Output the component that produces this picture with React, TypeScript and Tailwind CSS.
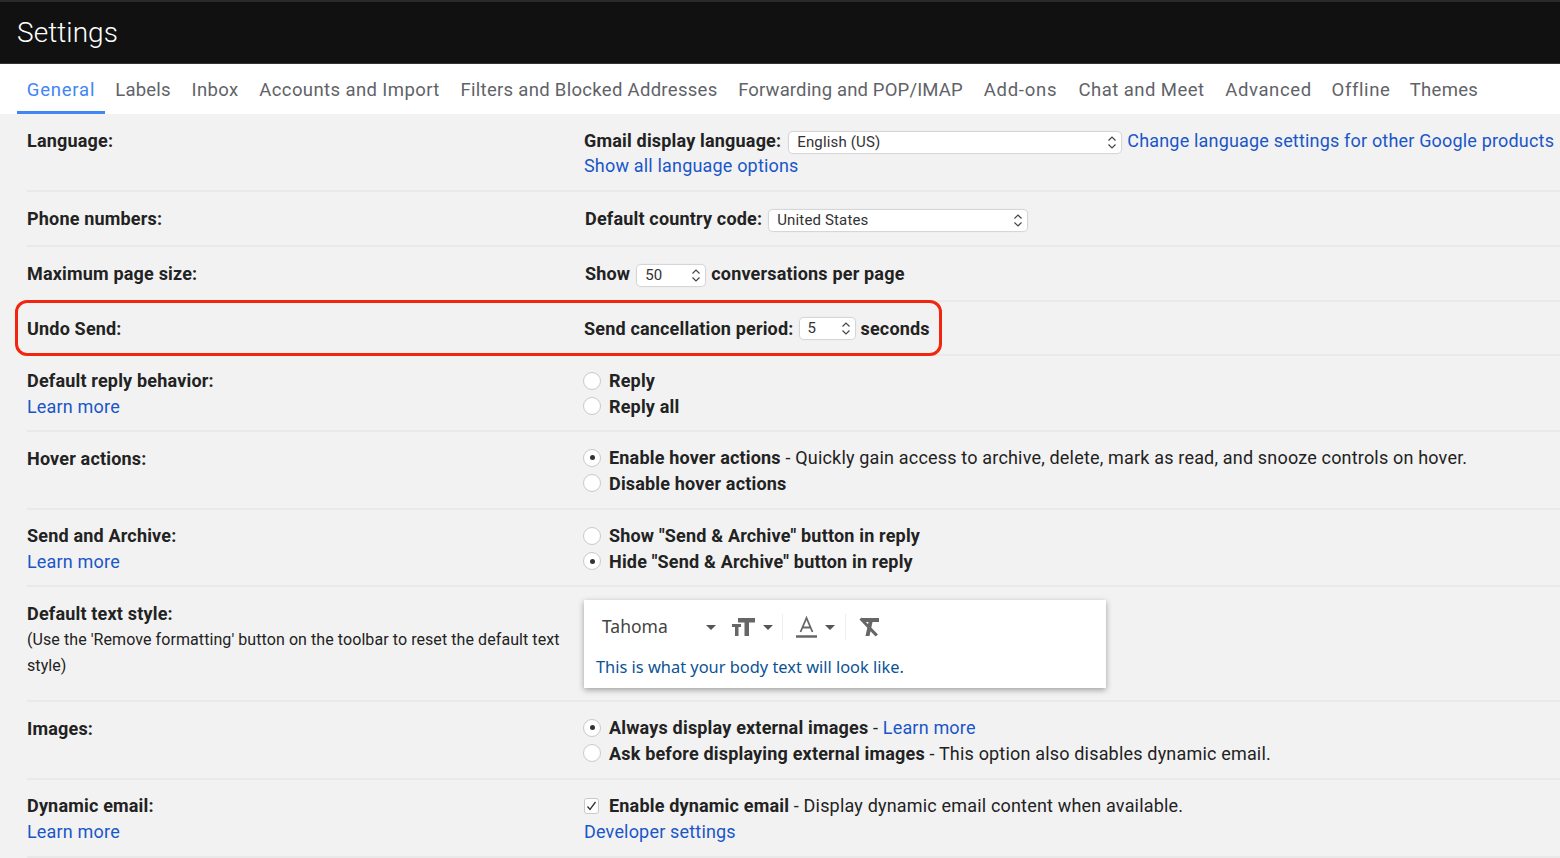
import React, { FC, ReactNode } from 'react'

const TABS = [
  { name: 'General', cls: 'w-[88px] pt-[6px] tracking-[0.8px]' },
  { name: 'Labels', cls: 'w-[76px] pt-[3px] tracking-[0.2px]' },
  { name: 'Inbox', cls: 'w-[68px] pt-[3px] tracking-[0.35px]' },
  { name: 'Accounts and Import', cls: 'w-[201px] pt-[3px] tracking-[0.4px]' },
  { name: 'Filters and Blocked Addresses', cls: 'w-[278px] pt-[3px] tracking-[0.3px]' },
  { name: 'Forwarding and POP/IMAP', cls: 'w-[245px] pt-[3px] tracking-[0.15px]' },
  { name: 'Add-ons', cls: 'w-[95px] pt-[3px] tracking-[0.75px]' },
  { name: 'Chat and Meet', cls: 'w-[147px] pt-[3px] tracking-[0.45px]' },
  { name: 'Advanced', cls: 'w-[107px] pt-[3px] tracking-[0.6px]' },
  { name: 'Offline', cls: 'w-[78px] pt-[3px] tracking-[0.6px]' },
  { name: 'Themes', cls: 'w-[88px] pt-[3px] tracking-[0.3px]' },
]

const Link: FC<{ children: ReactNode; className?: string }> = ({ children, className = '' }) => (
  <a className={`text-[#1a56c9] font-normal ${className}`}>{children}</a>
)

const Select: FC<{ value: string; className: string }> = ({ value, className }) => (
  <span
    className={`inline-flex h-[21px] items-center justify-between self-start rounded-[4px] bg-white pl-[8px] pr-[4px] text-[15px] font-normal tracking-[0.15px] text-[#333] shadow-[0_0_1px_1px_rgba(0,0,0,0.13)] ${className}`}
  >
    <span className="pt-px">{value}</span>
    <svg width="10" height="15" viewBox="0 0 10 15" fill="none" stroke="#444" strokeWidth="1.2">
      <path d="M1.500 5.500 5 2l3.500 3.500M1.500 9.500 5 13l3.500-3.500" />
    </svg>
  </span>
)

const Radio: FC<{ checked?: boolean }> = ({ checked }) => (
  <span className="-ml-px mr-[8px] flex h-[18px] w-[18px] shrink-0 items-center justify-center rounded-full border border-[#c9c9c9] bg-white">
    {checked && <span className="h-[5px] w-[5px] rounded-full bg-[#333]" />}
  </span>
)

const Option: FC<{ checked?: boolean; children: ReactNode }> = ({ checked, children }) => (
  <div className="flex h-[25.500px] items-center">
    <Radio checked={checked} />
    <span>{children}</span>
  </div>
)

const Desc: FC<{ children: ReactNode }> = ({ children }) => <span className="font-normal">{children}</span>

const Row: FC<{ label: ReactNode; h: string; children: ReactNode; labelClass?: string; pt?: string }> = ({
  label,
  h,
  children,
  labelClass = '',
  pt = 'pt-[13px]',
}) => (
  <div className={`relative ml-[27px] flex border-b-2 border-[#e9e9e9] ${pt} ${h}`}>
    <div className={`w-[557px] shrink-0 ${labelClass}`}>{label}</div>
    <div className="min-w-0 flex-1 whitespace-nowrap">{children}</div>
  </div>
)

const Caret: FC = () => (
  <svg width="10" height="5" viewBox="0 0 10 5" fill="#555">
    <path d="M0 0h10L5 5z" />
  </svg>
)

const TextStyleBox: FC = () => (
  <div className="h-[88px] w-[522px] bg-white pl-[12px] pt-[10px] font-normal tracking-normal shadow-[0_2px_6px_rgba(0,0,0,0.35)]">
    <div className="flex h-[34px] items-center">
      <span className="ml-[6px] w-[104px] font-['Noto_Sans',sans-serif] text-[17.500px] text-[#444]">Tahoma</span>
      <Caret />
      <svg className="ml-[16px]" width="24" height="20" viewBox="0 0 24 20" fill="#666">
        <path d="M6 1h17v4.500h-6V19h-4.500V5.500H6zM0 7h9v3H6.500v9H3v-9H0z" />
      </svg>
      <span className="ml-[7px] flex">
        <Caret />
      </span>
      <span className="ml-[9px] h-[26px] w-px bg-[#eee]" />
      <svg className="ml-[13px]" width="21" height="22" viewBox="0 0 21 22" fill="none" stroke="#666">
        <path d="M4.500 16 10.500 2l6 14M6.500 11.500h8" strokeWidth="1.800" />
        <path d="M0 20.500h21" strokeWidth="2.500" />
      </svg>
      <span className="ml-[8px] flex">
        <Caret />
      </span>
      <span className="ml-[10px] h-[26px] w-px bg-[#eee]" />
      <svg className="ml-[13px]" width="20" height="20" viewBox="0 0 20 20" fill="#666">
        <path d="M2 1h18v4h-6.500L10.500 19H6.500l3-14H6zM2.500.500l16.500 17-2.500 2L.500 2.500z" />
      </svg>
    </div>
    <div className="mt-[8px] h-[30px] font-['Noto_Sans',sans-serif] text-[16.400px] leading-[30px] text-[#0b5394]">
      This is what your body text will look like.
    </div>
  </div>
)

const App: FC = () => {
  return (
    <div className="h-[858px] w-[1560px] overflow-hidden bg-[#f2f2f2] font-['Roboto',sans-serif] text-[18px] font-bold leading-[25.500px] tracking-[0.18px] text-[#222]">
      <div className="flex h-[64px] items-center border-t-2 border-b border-t-[#2a2a2a] border-b-[#333] bg-[#111] pl-[17px] text-[28px] font-light tracking-[0.05px] text-white">
        Settings
      </div>

      <div className="flex h-[50px] bg-white pl-[17px] text-[18.500px] font-normal text-[#5f6368]">
        {TABS.map((t, i) => (
          <div
            key={t.name}
            className={`flex h-full items-center justify-center whitespace-nowrap ${t.cls} ${
              i === 0 ? 'border-b-[3px] border-[#4285f4] text-[#4285f4]' : ''
            }`}
          >
            {t.name}
          </div>
        ))}
      </div>

      <Row label="Language:" h="h-[78px]" pt="pt-[14px]">
        <div className="flex h-[25px] items-center">
          Gmail display language:
          <Select value="English (US)" className="ml-[8px] mt-[4px] w-[332px]" />
          <Link className="ml-[6px]">Change language settings for other Google products</Link>
        </div>
        <Link>Show all language options</Link>
      </Row>

      <Row label="Phone numbers:" h="h-[55px]" pt="pt-[14px]">
        <div className="ml-px flex items-center">
          Default country code:
          <Select value="United States" className="ml-[7px] mt-[4px] w-[258px]" />
        </div>
      </Row>

      <Row label="Maximum page size:" h="h-[55px]" pt="pt-[14px]">
        <div className="ml-px flex items-center">
          Show
          <Select value="50" className="ml-[7px] mr-[6px] mt-[4px] w-[68px]" />
          conversations per page
        </div>
      </Row>

      <Row label="Undo Send:" h="h-[54px]" pt="pt-[14px]">
        <div className="flex items-center">
          Send cancellation period:
          <Select value="5" className="mx-[6px] mt-[2px] w-[55px]" />
          seconds
        </div>
        <div className="pointer-events-none absolute left-[-12px] top-[-2px] h-[56px] w-[927px] rounded-[12px] border-[3px] border-[#f2250e]" />
      </Row>

      <Row
        label={
          <>
            Default reply behavior:
            <br />
            <Link>Learn more</Link>
          </>
        }
        h="h-[76px]"
        pt="pt-[12px]"
      >
        <Option>Reply</Option>
        <Option>Reply all</Option>
      </Row>

      <Row label="Hover actions:" h="h-[78px]" labelClass="pt-px">
        <Option checked>
          Enable hover actions <Desc>- Quickly gain access to archive, delete, mark as read, and snooze controls on hover.</Desc>
        </Option>
        <Option>Disable hover actions</Option>
      </Row>

      <Row
        label={
          <>
            Send and Archive:
            <br />
            <Link>Learn more</Link>
          </>
        }
        h="h-[77px]"
      >
        <Option>Show "Send &amp; Archive" button in reply</Option>
        <Option checked>Hide "Send &amp; Archive" button in reply</Option>
      </Row>

      <Row
        label={
          <>
            Default text style:
            <div className="text-[16px] font-normal leading-[26.500px] tracking-[0.075px]">
              (Use the 'Remove formatting' button on the toolbar to reset the default text style)
            </div>
          </>
        }
        h="h-[115px]"
        labelClass="pt-px"
      >
        <TextStyleBox />
      </Row>

      <Row label="Images:" h="h-[78px]" labelClass="pt-px">
        <Option checked>
          Always display external images <Desc>- </Desc>
          <Link>Learn more</Link>
        </Option>
        <Option>
          Ask before displaying external images <Desc>- This option also disables dynamic email.</Desc>
        </Option>
      </Row>

      <Row
        label={
          <>
            Dynamic email:
            <br />
            <Link>Learn more</Link>
          </>
        }
        h="h-[78px]"
      >
        <div className="flex h-[25.500px] items-center">
          <span className="mr-[10px] flex h-[16px] w-[15px] items-center justify-center rounded-[3px] border border-[#c9c9c9] bg-white">
            <svg width="11" height="10" viewBox="0 0 11 10" fill="none" stroke="#333" strokeWidth="1.300">
              <path d="m1.500 5.500 2.500 3L9.500 1" />
            </svg>
          </span>
          <span>
            Enable dynamic email <Desc>- Display dynamic email content when available.</Desc>
          </span>
        </div>
        <Link>Developer settings</Link>
      </Row>
    </div>
  )
}

export default App
